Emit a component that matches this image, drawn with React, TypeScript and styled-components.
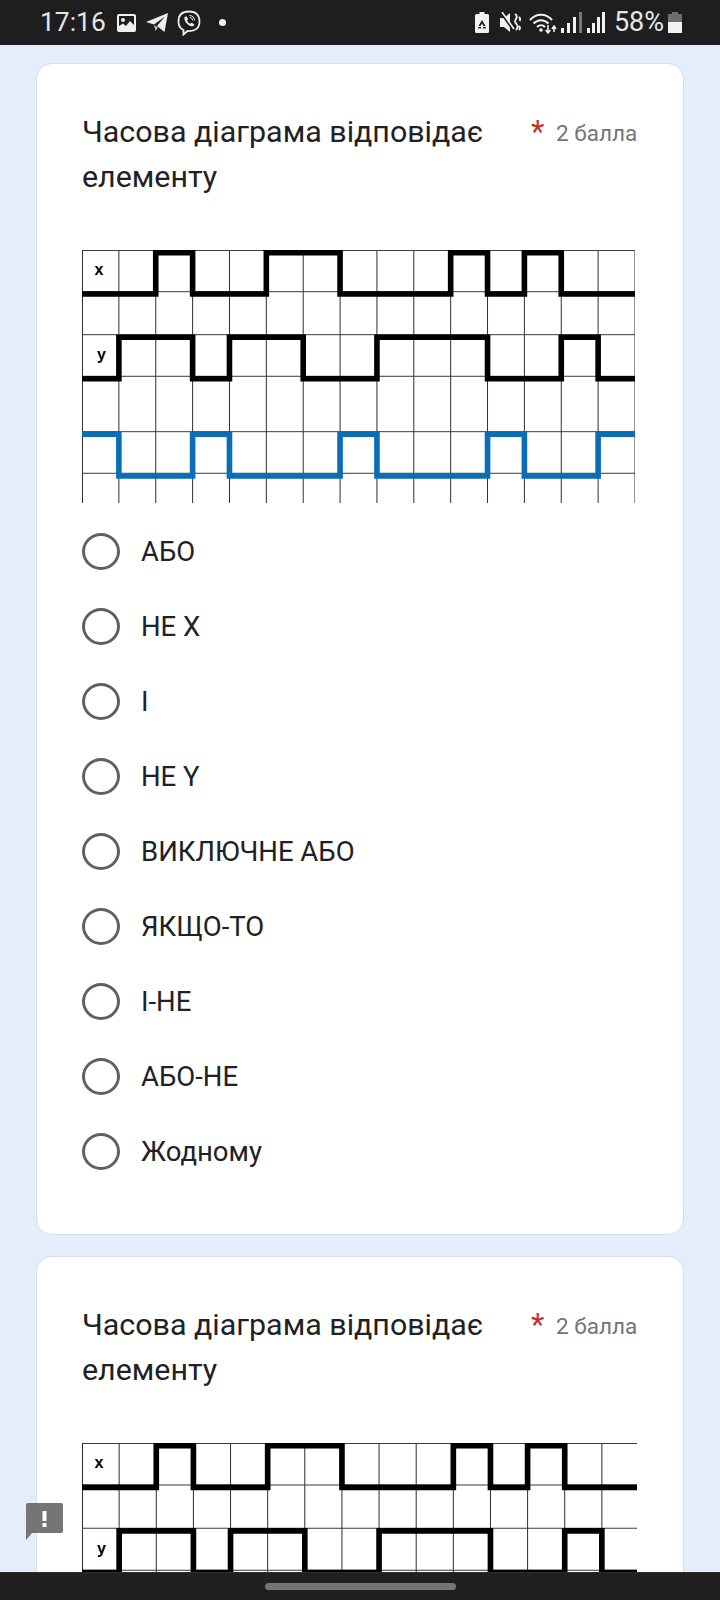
import React from "react";
import styled, { createGlobalStyle } from "styled-components";

const Global = createGlobalStyle`
  html, body { margin: 0; padding: 0; background: #e4eefa; }
  body { font-family: Roboto, "Liberation Sans", sans-serif; }
`;

const Page = styled.div`
  position: relative;
  width: 720px;
  height: 1600px;
  overflow: hidden;
  background: #e4eefa;
`;

const StatusBar = styled.header`
  display: flex;
  align-items: center;
  justify-content: space-between;
  box-sizing: border-box;
  height: 45px;
  padding: 0 38px 0 40px;
  background: #1e1e1e;
  color: #e6e6e6;
`;

const StatusGroup = styled.div`
  display: flex;
  align-items: center;
`;

const Clock = styled.span`
  font-size: 26.4px;
  line-height: 45px;
  margin-right: 11px;
`;

const Percent = styled.span`
  font-size: 27px;
  line-height: 45px;
  margin: 0 4px 0 9px;
`;

const Icon = styled.svg<{ $gap?: number }>`
  display: block;
  flex: none;
  margin-left: ${(p) => p.$gap ?? 0}px;
`;

const Content = styled.main`
  display: flex;
  flex-direction: column;
  gap: 21.5px;
  padding: 18px 36px 0;
`;

const Card = styled.section`
  box-sizing: border-box;
  width: 648px;
  padding: 45px 45px 45px;
  background: #fff;
  border: 1px solid #d5e0ee;
  border-radius: 16px;
`;

const Header = styled.div`
  display: flex;
  align-items: flex-start;
  margin-bottom: 51px;
`;

const Title = styled.h2`
  flex: 0 0 449px;
  margin: 1px 0 0;
  font-size: 30.4px;
  font-weight: 400;
  line-height: 44.5px;
  color: #202124;
`;

const Required = styled.span`
  flex: 0 0 25px;
  font-size: 31px;
  line-height: 45px;
  color: #c5322b;
`;

const Points = styled.span`
  font-size: 22.5px;
  line-height: 48px;
  color: #70757a;
  white-space: nowrap;
`;

const DiagramFrame = styled.div`
  overflow: hidden;
  width: 555px;
`;

const DiagramSvg = styled.svg`
  display: block;
`;

const DiagramLabel = styled.text`
  font-family: "Liberation Sans", sans-serif;
  font-size: 16px;
  font-weight: 700;
  fill: #000;
`;

const Options = styled.ul`
  list-style: none;
  margin: 11px 0 0;
  padding: 0;
`;

const Option = styled.li`
  display: flex;
  align-items: center;
  height: 75px;
  font-size: 27.5px;
  color: #202124;
`;

const Radio = styled.span`
  flex: none;
  box-sizing: border-box;
  width: 38px;
  height: 37px;
  margin-right: 21px;
  border: 3.5px solid #5f6060;
  border-radius: 50%;
`;

const Feedback = styled.div`
  position: absolute;
  left: 26px;
  top: 1503px;
`;

const NavBar = styled.div`
  position: absolute;
  left: 0;
  right: 0;
  bottom: 0;
  height: 28px;
  display: flex;
  justify-content: center;
  align-items: center;
  background: #202020;
  border-top: 1px solid #2d2d2d;
  box-sizing: border-box;
`;

const NavHandle = styled.div`
  width: 191px;
  height: 7px;
  border-radius: 4px;
  background: #757575;
`;

const COLS = 15;
const CELL = 36.87;
const W = COLS * CELL;
const H = 253;
const rowLines = [0.5, 41.7, 84.7, 126.3, 181.7, 223.3];

function wave(levels: number[], hi: number, lo: number) {
  // levels holds the level of each column, 1 = high
  let d = `M0 ${levels[0] ? hi : lo}`;
  levels.forEach((l, i) => {
    const y = l ? hi : lo;
    if (i > 0 && levels[i - 1] !== l) d += ` L${i * CELL} ${y}`;
    d += ` L${(i + 1) * CELL} ${y}`;
  });
  return d;
}

const X = [0, 0, 1, 0, 0, 1, 1, 0, 0, 0, 1, 0, 1, 0, 0];
const Y = [0, 1, 1, 0, 1, 1, 0, 0, 1, 1, 1, 0, 0, 1, 0];
const Z = [1, 0, 0, 1, 0, 0, 0, 1, 0, 0, 0, 1, 0, 0, 1];

function Diagram({ width }: { width: number }) {
  const scale = width / W;
  return (
    <DiagramFrame>
      <DiagramSvg width={width} height={H * scale} viewBox={`0 0 ${W} ${H}`}>
        {Array.from({ length: COLS + 1 }, (_, i) => (
          <line
            key={i}
            x1={Math.max(i * CELL, 0.5)}
            x2={Math.max(i * CELL, 0.5)}
            y1={0}
            y2={H}
            stroke="#2e2e2e"
            strokeWidth={1}
          />
        ))}
        {rowLines.map((y) => (
          <line key={y} x1={0} x2={W} y1={y} y2={y} stroke="#3a3a3a" strokeWidth={1} />
        ))}
        <path d={wave(X, 2.7, 44)} fill="none" stroke="#000" strokeWidth={5.6} strokeLinejoin="miter" />
        <path d={wave(Y, 87.3, 128.7)} fill="none" stroke="#000" strokeWidth={5.6} strokeLinejoin="miter" />
        <path d={wave(Z, 184.3, 226)} fill="none" stroke="#0a6db8" strokeWidth={5.6} strokeLinejoin="miter" />
        <DiagramLabel x={12.5} y={25}>x</DiagramLabel>
        <DiagramLabel x={15} y={110}>y</DiagramLabel>
      </DiagramSvg>
    </DiagramFrame>
  );
}

const labels = ["АБО", "НЕ X", "І", "НЕ Y", "ВИКЛЮЧНЕ АБО", "ЯКЩО-ТО", "І-НЕ", "АБО-НЕ", "Жодному"];

function Question({ width, showOptions }: { width: number; showOptions: boolean }) {
  return (
    <Card>
      <Header>
        <Title>Часова діаграма відповідає елементу</Title>
        <Required>*</Required>
        <Points>2 балла</Points>
      </Header>
      <Diagram width={width} />
      {showOptions && (
        <Options>
          {labels.map((l) => (
            <Option key={l}>
              <Radio />
              {l}
            </Option>
          ))}
        </Options>
      )}
    </Card>
  );
}

export default function App() {
  return (
    <Page>
      <Global />
      <StatusBar>
        <StatusGroup>
          <Clock>17:16</Clock>
          <Icon width="19" height="18" viewBox="0 0 19 18">
            <rect width="19" height="18" rx="2" fill="#efefef" />
            <rect x="2" y="2" width="15" height="14" fill="#1e1e1e" />
            <circle cx="6" cy="6" r="2" fill="#efefef" />
            <path d="M2 16 L2 12 L6 9.5 L9 12 L13 7 L17 11 L17 16Z" fill="#efefef" />
          </Icon>
          <Icon $gap={10} width="22" height="19" viewBox="0 0 22 19">
            <path d="M22 0 L0 9 L8 11.5 L19 3.5 L11 13 L18.5 19Z" fill="#efefef" />
            <path d="M8 12 L9.5 18 L12 14.5Z" fill="#bbb" />
          </Icon>
          <Icon $gap={9} width="24" height="26" viewBox="0 0 24 26">
            <path
              d="M12 1.5 C5 1.5 1.5 5 1.5 11.5 C1.5 16 3.3 18.7 6.5 20 L6.5 24.5 L10.5 21 C18.5 21.5 22.5 18 22.5 11.5 C22.5 5 19 1.5 12 1.5Z"
              fill="none"
              stroke="#efefef"
              strokeWidth="1.8"
            />
            <path
              d="M7.5 7 L9.5 6.2 L11 9.2 L10 10.5 C10.6 12 11.8 13.2 13.3 13.8 L14.5 12.8 L17.3 14.3 L16.5 16.3 C12 17 6.5 11.5 7.5 7Z"
              fill="#efefef"
            />
            <path d="M12.5 5.5 C15.5 5.5 17.5 7.5 17.5 10.5 M12.8 7.5 C14.5 7.5 15.5 8.5 15.5 10.3" fill="none" stroke="#efefef" strokeWidth="1" />
          </Icon>
          <Icon $gap={18} width="7" height="7" viewBox="0 0 7 7">
            <circle cx="3.5" cy="3.5" r="3.5" fill="#efefef" />
          </Icon>
        </StatusGroup>
        <StatusGroup>
          <Icon width="14" height="21" viewBox="0 0 14 21">
            <path d="M4.5 0 H9.5 V2 H12.5 Q14 2 14 3.5 V19.5 Q14 21 12.5 21 H1.5 Q0 21 0 19.5 V3.5 Q0 2 1.5 2 H4.5Z" fill="#f2f2f2" />
            <path d="M7 8 L10.5 14 L8.5 14 L7 11.5 L5.5 14 L3.5 14Z M3 15 L6 15 L6 16.5 L3.5 16.5Z M8 15 L11 15 L10.5 16.5 L8 16.5Z" fill="#1e1e1e" />
          </Icon>
          <Icon $gap={11} width="21" height="21" viewBox="0 0 21 21">
            <path d="M0 6 L4 6 L10 1 L10 20 L4 15 L0 15Z" fill="#f2f2f2" />
            <path d="M1 1 L13 18" stroke="#1e1e1e" strokeWidth="2" />
            <path d="M2 0 L14 17" stroke="#f2f2f2" strokeWidth="1.6" />
            <path d="M15 2 Q18 4 16 7 Q14 10 16.5 12 Q19 15 16 18 M19 5 Q21 7 19.5 9 M19 14 Q21 16 19 18" fill="none" stroke="#f2f2f2" strokeWidth="1.8" />
          </Icon>
          <Icon $gap={8} width="28" height="22" viewBox="0 0 28 22">
            <path d="M1 8 C7 1 17 1 23 8 M4.5 11.5 C9 7 15 7 19.5 11.5 M8 15 C10.5 12.5 13.5 12.5 16 15" fill="none" stroke="#f2f2f2" strokeWidth="2" />
            <circle cx="12" cy="18" r="1.8" fill="#f2f2f2" />
            <path d="M19 13 V20 M16.7 18 L19 21 L21.3 18 M25 20 V15 M23 17 L25 14 L27 17" fill="none" stroke="#f2f2f2" strokeWidth="1.5" />
          </Icon>
          <Icon $gap={4} width="21" height="21" viewBox="0 0 21 21">
            <rect x="0" y="16" width="3" height="5" fill="#f2f2f2" />
            <rect x="6" y="11" width="3" height="10" fill="#f2f2f2" />
            <rect x="12" y="5" width="3" height="16" fill="#f2f2f2" />
            <rect x="18" y="0" width="3" height="21" fill="#777" />
          </Icon>
          <Icon $gap={5} width="18" height="21" viewBox="0 0 18 21">
            <rect x="0" y="16" width="3" height="5" fill="#f2f2f2" />
            <rect x="5" y="11" width="3" height="10" fill="#f2f2f2" />
            <rect x="10" y="5" width="3" height="16" fill="#f2f2f2" />
            <rect x="15" y="0" width="3" height="21" fill="#f2f2f2" />
          </Icon>
          <Percent>58%</Percent>
          <Icon width="14" height="21" viewBox="0 0 14 21">
            <path d="M4 0 H10 V2 H14 V21 H0 V2 H4Z" fill="#6e6e6e" />
            <rect x="0" y="10" width="14" height="11" fill="#f2f2f2" />
          </Icon>
        </StatusGroup>
      </StatusBar>
      <Content>
        <Question width={553} showOptions />
        <Question width={557} showOptions={false} />
      </Content>
      <Feedback>
        <Icon width="37" height="38" viewBox="0 0 37 38">
          <path d="M2 0 H35 Q37 0 37 2 V28 Q37 30 35 30 H6 L0 37 V2 Q0 0 2 0Z" fill="#757575" />
          <rect x="16.5" y="8" width="4" height="10" fill="#fff" />
          <rect x="16.5" y="20" width="4" height="4" fill="#fff" />
        </Icon>
      </Feedback>
      <NavBar>
        <NavHandle />
      </NavBar>
    </Page>
  );
}
